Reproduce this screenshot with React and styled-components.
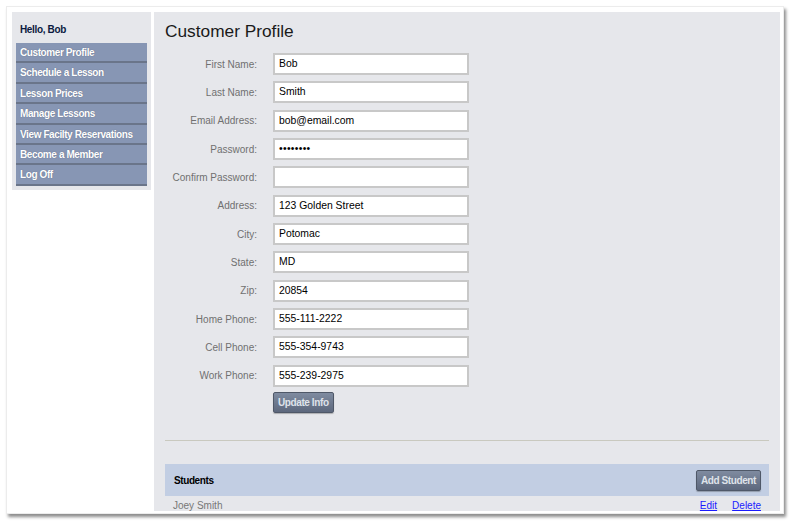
import React from "react";
import styled, { createGlobalStyle } from "styled-components";

const GlobalStyle = createGlobalStyle`
  html, body {
    margin: 0;
    padding: 0;
    background: #ffffff;
    font-family: "Liberation Sans", Arial, sans-serif;
  }
`;

const Page = styled.div`
  width: 792px;
  height: 522px;
  padding: 6px 0 0 6px;
  box-sizing: border-box;
  overflow: hidden;
`;

const Card = styled.div`
  width: 778px;
  height: 508px;
  box-sizing: border-box;
  background: #fff;
  border: 1px solid #ececec;
  box-shadow: 2px 3px 3px rgba(0, 0, 0, 0.45);
  padding: 5px 3px 3px 5px;
  display: flex;
  gap: 3px;
  align-items: flex-start;
`;

const Sidebar = styled.div`
  width: 139px;
  flex: none;
  background: #e6e7eb;
  padding: 0 4px 4px;
  box-sizing: border-box;
`;

const Greeting = styled.div`
  height: 31px;
  line-height: 36px;
  padding-left: 4px;
  font-size: 10px;
  letter-spacing: -0.35px;
  font-weight: bold;
  color: #0b1a40;
`;

const NavItem = styled.div`
  height: 18.4px;
  line-height: 19px;
  padding-left: 4px;
  background: #8796b4;
  border-bottom: 2px solid #6a758a;
  color: #fff;
  font-size: 10px;
  letter-spacing: -0.4px;
  font-weight: bold;
  text-shadow: 0 0 1px rgba(60, 70, 90, 0.6);
  white-space: nowrap;
`;

const Main = styled.div`
  flex: 1;
  height: 499px;
  overflow: hidden;
  background: #e6e7eb;
  padding: 0 11px;
  box-sizing: border-box;
`;

const Title = styled.h1`
  margin: 0;
  padding-top: 9px;
  height: 41px;
  box-sizing: border-box;
  font-size: 17.3px;
  font-weight: normal;
  color: #1a1a1a;
`;

const Form = styled.div`
  display: grid;
  grid-template-columns: 92px 196px;
  column-gap: 16px;
  row-gap: 6.35px;
  align-items: center;
`;

const Label = styled.label`
  text-align: right;
  font-size: 10px;
  color: #707070;
  white-space: nowrap;
`;

const Input = styled.div`
  height: 22px;
  box-sizing: border-box;
  background: #fff;
  border: 2px solid #c8c8c8;
  padding-left: 4px;
  font-size: 10.4px;
  line-height: 18px;
  color: #000;
  letter-spacing: ${(p) => (p.$secret ? "0.3px" : "0")};
`;

const Button = styled.button`
  height: 21px;
  padding: 0 4px;
  background: linear-gradient(#7f8ba0, #5d687d);
  border: 1px solid #4f5868;
  border-radius: 2px;
  box-shadow: 0 1px 1px rgba(0, 0, 0, 0.25);
  color: #dfe3ea;
  font-family: "Liberation Sans", Arial, sans-serif;
  font-size: 10px;
  letter-spacing: -0.4px;
  font-weight: bold;
  white-space: nowrap;
  cursor: pointer;
`;

const ButtonCell = styled.div`
  grid-column: 2;
  margin-top: -1px;
`;

const Rule = styled.hr`
  margin: 27px 0 0;
  border: none;
  border-top: 1px solid #c9c9bf;
`;

const StudentsBar = styled.div`
  margin-top: 23px;
  height: 32px;
  background: #c2cee3;
  display: flex;
  align-items: center;
  justify-content: space-between;
  padding: 0 8px 0 9px;
  font-size: 10px;
  letter-spacing: -0.4px;
  font-weight: bold;
  color: #000;
`;

const StudentRow = styled.div`
  display: flex;
  align-items: center;
  justify-content: space-between;
  padding: 0 8px;
  height: 18px;
  font-size: 10px;
  color: #777;
`;

const Links = styled.div`
  display: flex;
  gap: 15px;
`;

const Link = styled.a`
  color: #1a1aff;
  text-decoration: underline;
  cursor: pointer;
`;

const fields = [
  ["First Name:", "Bob"],
  ["Last Name:", "Smith"],
  ["Email Address:", "bob@email.com"],
  ["Password:", "••••••••", true],
  ["Confirm Password:", ""],
  ["Address:", "123 Golden Street"],
  ["City:", "Potomac"],
  ["State:", "MD"],
  ["Zip:", "20854"],
  ["Home Phone:", "555-111-2222"],
  ["Cell Phone:", "555-354-9743"],
  ["Work Phone:", "555-239-2975"],
];

const nav = [
  "Customer Profile",
  "Schedule a Lesson",
  "Lesson Prices",
  "Manage Lessons",
  "View Facilty Reservations",
  "Become a Member",
  "Log Off",
];

export default function App() {
  return (
    <React.Fragment>
      <GlobalStyle />
      <Page>
        <Card>
          <Sidebar>
            <Greeting>Hello, Bob</Greeting>
            {nav.map((n) => (
              <NavItem key={n}>{n}</NavItem>
            ))}
          </Sidebar>
          <Main>
            <Title>Customer Profile</Title>
            <Form>
              {fields.map(([label, value, secret]) => (
                <React.Fragment key={label}>
                  <Label>{label}</Label>
                  <Input $secret={secret}>{value}</Input>
                </React.Fragment>
              ))}
              <ButtonCell>
                <Button>Update Info</Button>
              </ButtonCell>
            </Form>
            <Rule />
            <StudentsBar>
              <span>Students</span>
              <Button>Add Student</Button>
            </StudentsBar>
            <StudentRow>
              <span>Joey Smith</span>
              <Links>
                <Link>Edit</Link>
                <Link>Delete</Link>
              </Links>
            </StudentRow>
          </Main>
        </Card>
      </Page>
    </React.Fragment>
  );
}
